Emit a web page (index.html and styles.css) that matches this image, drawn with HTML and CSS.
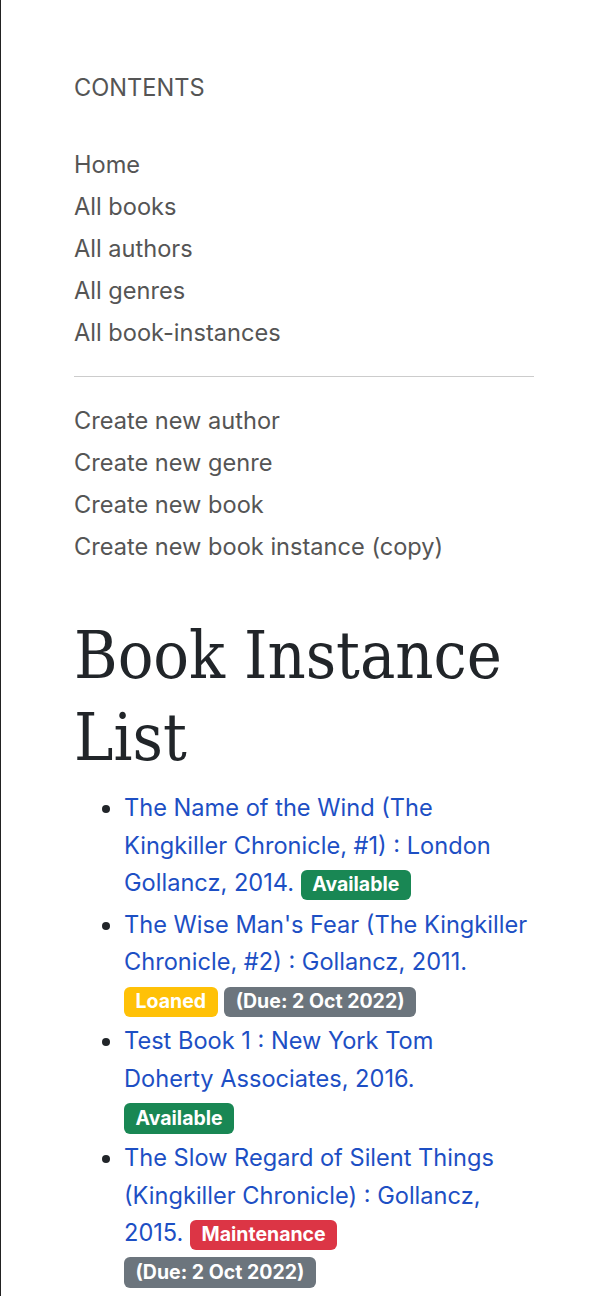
FILE: index.html
```html
<!DOCTYPE html>
<html lang="en">
<head>
<meta charset="utf-8">
<title>Local Library</title>
<link rel="stylesheet" href="styles.css">
</head>
<body>
<div class="page">
  <nav class="sidebar">
    <p class="sidebar-title">CONTENTS</p>
    <ul class="nav">
      <li><a href="#">Home</a></li>
      <li><a href="#">All books</a></li>
      <li><a href="#">All authors</a></li>
      <li><a href="#">All genres</a></li>
      <li><a href="#">All book-instances</a></li>
    </ul>
    <hr class="divider">
    <ul class="nav">
      <li><a href="#">Create new author</a></li>
      <li><a href="#">Create new genre</a></li>
      <li><a href="#">Create new book</a></li>
      <li><a href="#">Create new book instance (copy)</a></li>
    </ul>
  </nav>
  <main class="content">
    <h1 class="title">Book Instance List</h1>
    <ul class="instances">
      <li><a href="#">The Name of the Wind (The Kingkiller Chronicle, #1) : London Gollancz, 2014.</a> <span class="badge badge-success">Available</span></li>
      <li><a href="#">The Wise Man's Fear (The Kingkiller Chronicle, #2) : Gollancz, 2011.</a> <span class="badge badge-warning">Loaned</span> <span class="badge badge-secondary">(Due: 2 Oct 2022)</span></li>
      <li><a href="#">Test Book 1 : New York Tom Doherty Associates, 2016.</a> <span class="badge badge-success">Available</span></li>
      <li><a href="#">The Slow Regard of Silent Things (Kingkiller Chronicle) : Gollancz, 2015.</a> <span class="badge badge-danger">Maintenance</span> <span class="badge badge-secondary">(Due: 2 Oct 2022)</span></li>
    </ul>
  </main>
</div>
</body>
</html>
```
FILE: styles.css
```css
html, body {
  margin: 0;
  padding: 0;
  background: #fff;
}
body {
  border-left: 1px solid #222;
  min-height: 1296px;
  box-sizing: border-box;
  font-family: Inter, "Noto Sans", sans-serif;
  font-size: 23.6px;
  color: #212529;
}
.page {
  padding: 69px 0 0 73px;
  width: 460px;
}
.sidebar-title {
  margin: 0 0 37px;
  line-height: 38px;
  color: #555;
}
.nav {
  list-style: none;
  margin: 0;
  padding: 0;
}
.nav li {
  line-height: 42px;
}
.nav a {
  color: #555;
  text-decoration: none;
}
.divider {
  margin: 22px 0 23px;
  border: 0;
  border-top: 1px solid #ccc;
  height: 0;
}
.title {
  margin: 47px 0 10px;
  font-family: "DejaVu Serif Condensed", "DejaVu Serif", serif;
  font-stretch: condensed;
  font-weight: normal;
  font-size: 66px;
  line-height: 82px;
  color: #212529;
}
.instances {
  margin: 0;
  padding-left: 50px;
  width: 404px;
  line-height: 37.7px;
}
.instances li + li {
  margin-top: 3.5px;
}
.instances a {
  color: #1d4fc4;
  text-decoration: none;
}
.badge {
  display: inline-block;
  font-size: 19.5px;
  font-weight: 700;
  line-height: 1;
  padding: 5.5px 11.5px;
  border-radius: 6px;
  color: #fff;
  vertical-align: baseline;
  white-space: nowrap;
}
.badge-success { background: #198754; }
.badge-warning { background: #ffc107; }
.badge-danger { background: #dc3545; }
.badge-secondary { background: #6c757d; }
```
